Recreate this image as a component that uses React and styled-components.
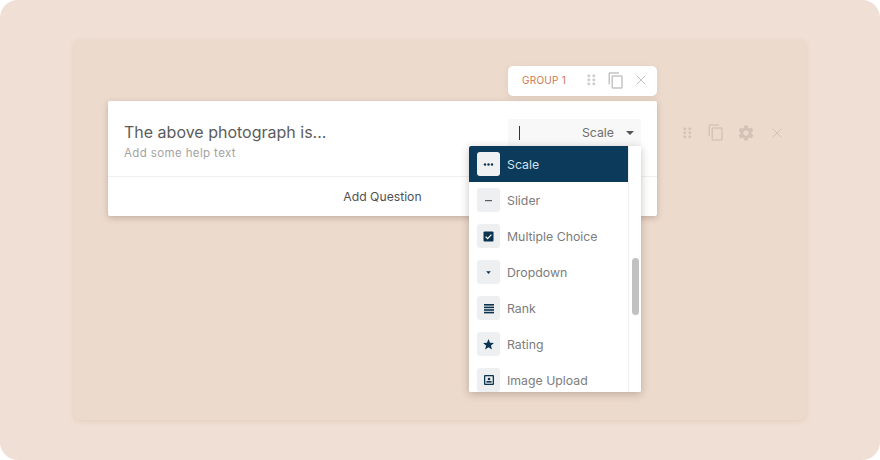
import React from "react";
import styled, { createGlobalStyle } from "styled-components";
import { X } from "lucide-react";

const Global = createGlobalStyle`
  html, body { margin: 0; padding: 0; background: #fff; }
  body { font-family: "Inter", "Liberation Sans", sans-serif; }
  #root { width: 880px; height: 460px; overflow: hidden; }
`;
const Page = styled.div`
  width: 880px; height: 460px; box-sizing: border-box; background: #f0dfd4; border-radius: 18px;
  padding: 41px 74px 40px;
`;
const Panel = styled.div`
  height: 100%; box-sizing: border-box; background: #ecdacd; border-radius: 6px;
  box-shadow: 0 1px 5px rgba(160,120,95,.18);
  padding: 25px 0 0 34px; display: flex; flex-direction: column; align-items: flex-start;
`;
const GroupRow = styled.div`
  width: 549px; display: flex; justify-content: flex-end; margin-bottom: 5px;
`;
const GroupTag = styled.div`
  width: 149px; height: 30px; box-sizing: border-box; background: #fff; border-radius: 5px;
  display: flex; align-items: center; padding: 0 0 2px 14px;
  box-shadow: 0 2px 6px rgba(150,110,90,.14);
`;
const GroupLabel = styled.span`
  font: 400 10px/1 "Inter", sans-serif; letter-spacing: .25px; color: #cf7650; width: 64px; white-space: nowrap;
`;
const Actions = styled.div`
  display: flex; align-items: center; gap: ${p => p.$gap}px;
`;
const Handle = styled.span`
  display: flex; margin-right: ${p => p.$after}px;
`;
const Close = styled(X)`
  margin-left: ${p => p.$shift}px;
`;
const Row = styled.div`
  display: flex; align-items: flex-start;
`;
const Card = styled.div`
  position: relative; width: 549px; height: 115px; background: #fff; border-radius: 2px;
  box-shadow: 0 2px 6px rgba(90,60,40,.28);
  display: flex; flex-direction: column;
`;
const CardTop = styled.div`
  height: 76px; box-sizing: border-box; border-bottom: 1px solid #f1f0ef; padding: 21px 16px 0;
  display: flex; justify-content: space-between; align-items: flex-start;
`;
const Question = styled.div`
  font: 400 16px/20px "Inter", sans-serif; color: #5c5c5c; white-space: nowrap;
`;
const Help = styled.div`
  font: 400 11.5px/14px "Inter", sans-serif; letter-spacing: .38px; color: #a3a3a3; margin-top: 4px; white-space: nowrap;
`;
const TypeSelect = styled.div`
  width: 133px; height: 28px; margin-top: -3px; box-sizing: border-box; background: #f8f8f8; padding: 0 7px 0 11px;
  display: flex; align-items: center;
`;
const Caret = styled.span`
  width: 1px; height: 14px; background: #333;
`;
const TypeValue = styled.span`
  margin-left: auto; font: 400 12.3px/1 "Inter", sans-serif; color: #6e6e6e;
`;
const Arrow = styled.span`
  margin-left: 12px; width: 0; height: 0; border: 4px solid transparent; border-top: 4px solid #555; border-bottom: 0;
`;
const AddQuestion = styled.div`
  flex: 1; display: flex; align-items: center; justify-content: center;
  font: 400 12.2px/1 "Inter", sans-serif; color: #525252; padding-top: 1px;
`;
const Side = styled.div`
  margin: 22px 0 0 25px;
`;
const Menu = styled.div`
  position: absolute; left: 361px; top: 45px; width: 172px; height: 246px; background: #fff; overflow: hidden;
  box-shadow: 0 2px 8px rgba(60,40,30,.28); display: flex; border-radius: 2px;
`;
const List = styled.div`
  width: 159px; display: flex; flex-direction: column; border-right: 1px solid #eee; flex-shrink: 0;
`;
const Item = styled.div`
  flex: 0 0 36px; height: 36px; box-sizing: border-box; display: flex; align-items: center; gap: 7px; padding-left: 8px;
  background: ${p => p.$active ? "#0c3a5b" : "#fff"};
  color: ${p => p.$active ? "#cfe2ee" : "#7c7c7c"};
  font: 400 12.3px/1 "Inter", sans-serif; white-space: nowrap;
`;
const ItemLabel = styled.span`
  padding-top: 2px;
`;
const IconBox = styled.span`
  width: 23px; height: 24px; border-radius: 3px; background: ${p => p.$active ? "#f0f1f2" : "#eeeff0"};
  display: flex; align-items: center; justify-content: center; flex-shrink: 0;
`;
const Track = styled.div`
  flex: 1; position: relative; background: #fff;
`;
const Thumb = styled.div`
  position: absolute; left: 3px; top: 112px; width: 7px; height: 57px; border-radius: 4px; background: #c1c1c1;
`;

const Dots = ({ c }) => (
  <svg width="10" height="14" viewBox="0 0 10 14" fill={c}>
    {[1.5, 5.5, 9.5].map(y => [1.5, 6.5].map(x => <rect key={`${x}${y}`} x={x} y={y} width="2.6" height="2.8" rx=".8" />))}
  </svg>
);
const Gear = ({ c }) => (
  <svg width="18" height="18" viewBox="0 0 24 24" fill={c}>
    <path d="M19.43 12.98c.04-.32.07-.64.07-.98s-.03-.66-.07-.98l2.11-1.65c.19-.15.24-.42.12-.64l-2-3.46c-.12-.22-.39-.3-.61-.22l-2.49 1c-.52-.4-1.08-.73-1.69-.98l-.38-2.65A.49.49 0 0 0 14 2h-4c-.25 0-.46.18-.49.42l-.38 2.65c-.61.25-1.17.59-1.69.98l-2.49-1c-.23-.09-.49 0-.61.22l-2 3.46c-.13.22-.07.49.12.64l2.11 1.65c-.04.32-.07.65-.07.98s.03.66.07.98l-2.11 1.65c-.19.15-.24.42-.12.64l2 3.46c.12.22.39.3.61.22l2.49-1c.52.4 1.08.73 1.69.98l.38 2.65c.03.24.24.42.49.42h4c.25 0 .46-.18.49-.42l.38-2.65c.61-.25 1.17-.59 1.69-.98l2.49 1c.23.09.49 0 .61-.22l2-3.46c.12-.22.07-.49-.12-.64l-2.11-1.65zM12 15.5a3.5 3.5 0 1 1 0-7 3.5 3.5 0 0 1 0 7z" />
  </svg>
);
const CopyIcon = ({ c }) => (
  <svg width="18" height="19" viewBox="0 0 24 24" fill={c}>
    <path d="M16 1H4c-1.1 0-2 .9-2 2v14h2V3h12V1zm3 4H8c-1.1 0-2 .9-2 2v14c0 1.1.9 2 2 2h11c1.1 0 2-.9 2-2V7c0-1.1-.9-2-2-2zm0 16H8V7h11v14z" />
  </svg>
);

const n = "#0c3350";
const icons = {
  Scale: <svg width="11" height="11" viewBox="0 0 11 11" fill={n}><circle cx="2" cy="5.5" r="1.2"/><circle cx="5.5" cy="5.5" r="1.2"/><circle cx="9" cy="5.5" r="1.2"/></svg>,
  Slider: <svg width="11" height="11" viewBox="0 0 11 11" fill="#555f67"><rect x="2" y="5" width="7" height="1.2"/></svg>,
  "Multiple Choice": <svg width="11" height="11" viewBox="0 0 11 11"><rect x=".5" y=".5" width="10" height="10" rx="1" fill={n}/><path d="M2.6 5.6l2 2 3.8-4" stroke="#fff" strokeWidth="1.2" fill="none"/></svg>,
  Dropdown: <svg width="11" height="11" viewBox="0 0 11 11" fill={n}><path d="M3.2 4.3h4.6l-2.3 2.6z"/></svg>,
  Rank: <svg width="12" height="11" viewBox="0 0 12 11" fill={n}><rect x="1" y="1" width="10" height="1.6"/><rect x="1" y="3.6" width="10" height="1.6"/><rect x="1" y="6.2" width="10" height="1.6"/><rect x="1" y="8.8" width="10" height="1.6"/></svg>,
  Rating: <svg width="13" height="13" viewBox="0 0 24 24" fill={n}><path d="M12 17.3l6.2 3.7-1.6-7L22 9.2l-7.2-.6L12 2 9.2 8.6 2 9.2 7.5 14l-1.7 7z"/></svg>,
  "Image Upload": <svg width="12" height="12" viewBox="0 0 12 12"><rect x="1" y="1" width="10" height="10" rx="1" fill={n}/><rect x="2.3" y="2.3" width="7.4" height="7.4" fill="#eeeff0"/><circle cx="6" cy="5" r="1.3" fill={n}/><rect x="3.4" y="7" width="5.2" height="1.6" fill={n}/></svg>,
};

export default function App() {
  return (
    <>
      <Global />
      <Page>
        <Panel>
          <GroupRow>
            <GroupTag>
              <GroupLabel>GROUP 1</GroupLabel>
              <Actions $gap={11}>
                <Dots c="#cdcdcd" />
                <CopyIcon c="#c4c4c4" />
                <Close size={16} strokeWidth={1.4} color="#bdbdbd" $shift={-3} />
              </Actions>
            </GroupTag>
          </GroupRow>
          <Row>
            <Card>
              <CardTop>
                <div>
                  <Question>The above photograph is...</Question>
                  <Help>Add some help text</Help>
                </div>
                <TypeSelect>
                  <Caret />
                  <TypeValue>Scale</TypeValue>
                  <Arrow />
                </TypeSelect>
              </CardTop>
              <AddQuestion>Add Question</AddQuestion>
              <Menu>
                <List>
                  {Object.keys(icons).map((k, i) => (
                    <Item key={k} $active={i === 0}>
                      <IconBox $active={i === 0}>{icons[k]}</IconBox>
                      <ItemLabel>{k}</ItemLabel>
                    </Item>
                  ))}
                </List>
                <Track><Thumb /></Track>
              </Menu>
            </Card>
            <Side>
              <Actions $gap={12}>
                <Handle $after={3}><Dots c="#d5c5b9" /></Handle>
                <CopyIcon c="#d5c5b9" />
                <Gear c="#d3c3b7" />
                <Close size={16} strokeWidth={1.5} color="#d3c3b7" $shift={2} />
              </Actions>
            </Side>
          </Row>
        </Panel>
      </Page>
    </>
  );
}
